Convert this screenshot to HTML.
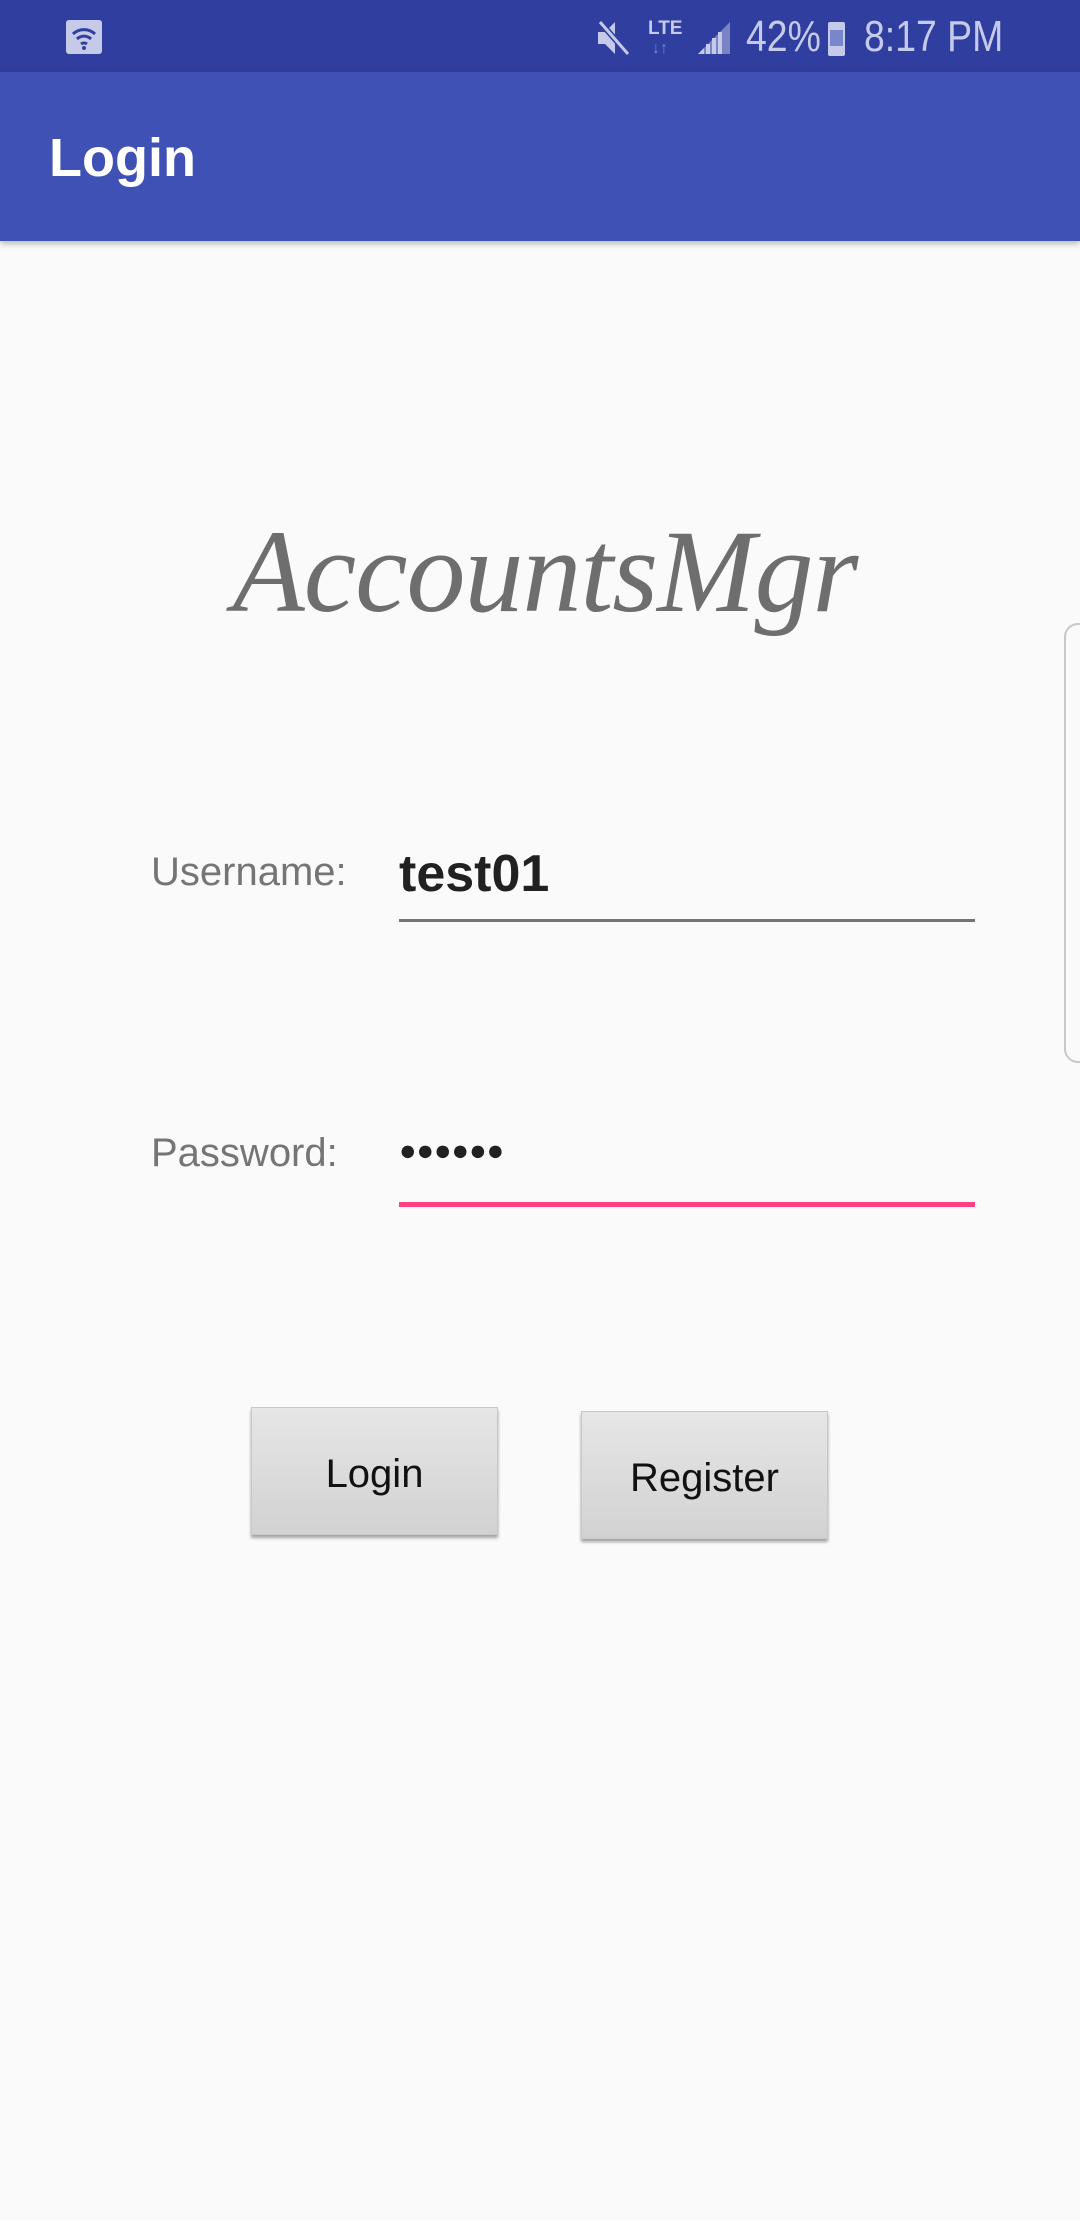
<!DOCTYPE html>
<html><head><meta charset="utf-8"><style>
*{margin:0;padding:0;box-sizing:border-box}
body{width:1080px;height:2220px;background:#fafafa;position:relative;overflow:hidden;font-family:"Liberation Sans",sans-serif}
.abs{position:absolute}
#sb{left:0;top:0;width:1080px;height:72px;background:#2f3e9f}
#ab{left:0;top:72px;width:1080px;height:169px;background:#3f51b5;box-shadow:0 3px 6px rgba(0,0,0,.25)}
.sbt{color:#c5cae9;font-size:44px;top:12px;transform:scaleX(.85);transform-origin:left}
.lbl{color:#757575;font-size:40px;line-height:1}
.btn{background:linear-gradient(#e6e6e6,#d2d2d2);border:1px solid #c8c8c8;box-shadow:0 3px 3px rgba(0,0,0,.35);font-size:40px;color:#111;display:flex;align-items:center;justify-content:center;padding-top:6px}
</style></head><body>
<div id="sb" class="abs"></div>
<div class="abs" style="left:66px;top:20px;width:36px;height:34px;background:#c5cae9;border-radius:3px"></div>
<svg class="abs" style="left:66px;top:20px" width="36" height="34" viewBox="0 0 36 34"><path d="M7 14a16 16 0 0 1 22 0M11 19a10 10 0 0 1 14 0M15 24a5 5 0 0 1 6 0" stroke="#2f3e9f" stroke-width="3" fill="none"/><circle cx="18" cy="28" r="2" fill="#2f3e9f"/></svg>
<svg class="abs" style="left:594px;top:18px" width="38" height="40" viewBox="0 0 38 40"><path d="M4 14h7l10-10v32l-10-10H4z" fill="#c5cae9"/><path d="M6 4l28 32" stroke="#2f3e9f" stroke-width="6"/><path d="M6 4l28 32" stroke="#c5cae9" stroke-width="3"/></svg>
<div class="abs" style="left:648px;top:18px;color:#c5cae9;font-size:19px;font-weight:bold">LTE</div>
<div class="abs" style="left:652px;top:40px;color:#7986cb;font-size:16px">↓↑</div>
<svg class="abs" style="left:696px;top:20px" width="36" height="36"><path d="M2 34L34 2V34Z" fill="#c5cae9" opacity=".5"/><path d="M2 34l6-6v6zM10 34v-10h4v10zM16 34v-16h4v16zM22 34v-22h4v22z" fill="#c5cae9"/></svg>
<div class="abs sbt" style="left:746px">42%</div>
<div class="abs" style="left:828px;top:22px;width:17px;height:34px;background:#c5cae9;border-radius:2px"></div>
<div class="abs" style="left:830px;top:30px;width:13px;height:16px;background:#7986cb"></div>
<div class="abs sbt" style="left:864px">8:17 PM</div>
<div id="ab" class="abs"></div>
<div class="abs" style="left:49px;top:128px;color:#fff;font-size:54px;line-height:60px;font-weight:bold">Login</div>
<div class="abs" style="left:215px;top:502px;width:660px;text-align:center;color:#6e6e6e;font-family:'Liberation Serif',serif;font-style:italic;font-size:118px;line-height:140px;letter-spacing:-1px">AccountsMgr</div>
<div class="abs" style="left:1064px;top:623px;width:30px;height:440px;border:2px solid #c8c8c8;border-radius:14px;background:#fafafa"></div>
<div class="abs lbl" style="left:151px;top:852px">Username:</div>
<div class="abs" style="left:399px;top:848px;font-size:52px;font-weight:bold;color:#212121;line-height:1">test01</div>
<div class="abs" style="left:399px;top:919px;width:576px;height:3px;background:#757575"></div>
<div class="abs lbl" style="left:151px;top:1133px">Password:</div>
<div class="abs" style="left:399px;top:1137px;font-size:29px;color:#212121;letter-spacing:0px;line-height:1">●●●●●●</div>
<div class="abs" style="left:399px;top:1202px;width:576px;height:5px;background:#ff4081"></div>
<div class="abs btn" style="left:251px;top:1407px;width:247px;height:128px">Login</div>
<div class="abs btn" style="left:581px;top:1411px;width:247px;height:128px">Register</div>
</body></html>
